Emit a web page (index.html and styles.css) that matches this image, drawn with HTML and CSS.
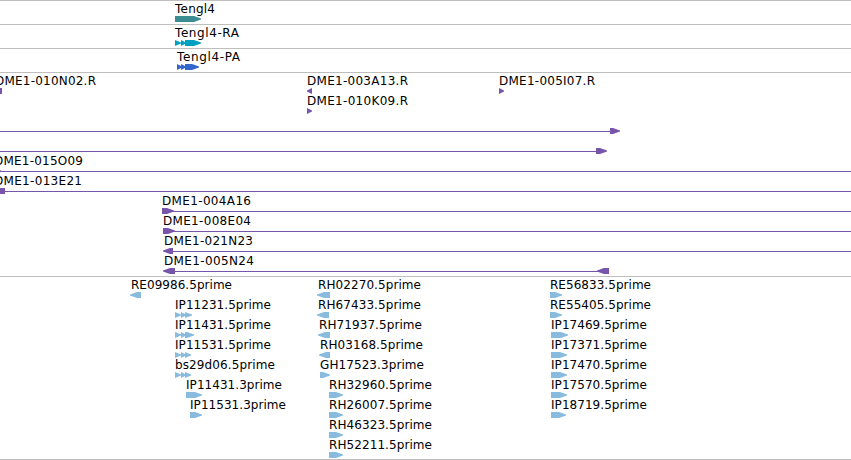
FILE: index.html
```
<!DOCTYPE html>
<html>
<head>
<meta charset="utf-8">
<title>Genome Browser</title>
<link rel="stylesheet" href="styles.css">
</head>
<body>
<div id="tracks"></div>
<script src="tracks.js"></script>
</body>
</html>
```
FILE: styles.css
```
body { margin: 0; background: #fff; overflow: hidden; }
#tracks { display: flex; flex-direction: column; }
.track { box-sizing: border-box; border-top: 1px solid #bebebe; padding-bottom: 3px; }
.track:last-child { border-bottom: 1px solid #bebebe; padding-bottom: 2px; }
.row { display: block; width: 100%; height: 20px; overflow: visible; }
.label { font: 12px "DejaVu Sans", sans-serif; fill: #000; }
.gene { fill: #3c8c93; }
.transcript { fill: #00a0c0; }
.protein { fill: #3366cc; }
.bac { fill: #7755aa; }
.est { fill: #88bbdd; }
```
FILE: tracks.js
```
// row: list of features, feature: { t: label, x: label start, w: label width, s: segments, l: line }
// segment: [from, to, strand]
var tracks = [
  { type: "gene", rows: [[{ t: "Tengl4", x: 175, w: 40, s: [[175, 201, 1]] }]] },
  { type: "transcript", rows: [[{ t: "Tengl4-RA", x: 175, w: 64, s: [[175, 181, 1], [181, 186, 1], [185, 201, 1]] }]] },
  { type: "protein", rows: [[{ t: "Tengl4-PA", x: 177, w: 63, s: [[177, 182, 1], [181, 186, 1], [185, 199, 1]] }]] },
  { type: "bac", rows: [
    [{ t: "DME1-010N02.R", x: -5, w: 101, s: [[-8, 2, -1]] },
     { t: "DME1-003A13.R", x: 307, w: 101, s: [[307, 312, -1]] },
     { t: "DME1-005I07.R", x: 499, w: 96, s: [[499, 504, 1]] }],
    [{ t: "DME1-010K09.R", x: 307, w: 101, s: [[307, 312, 1]] }],
    [{ s: [[610, 620, 1]], l: [0, 610] }],
    [{ s: [[596, 607, 1]], l: [0, 596] }],
    [{ t: "DME1-015O09", x: -6, w: 89, s: [[-8, 1, 1]], l: [0, 851] }],
    [{ t: "DME1-013E21", x: -6, w: 88, s: [[-8, 5, -1]], l: [5, 851] }],
    [{ t: "DME1-004A16", x: 162, w: 89, s: [[162, 174, 1]], l: [170, 851] }],
    [{ t: "DME1-008E04", x: 163, w: 88, s: [[163, 175, 1]], l: [170, 851] }],
    [{ t: "DME1-021N23", x: 164, w: 89, s: [[163, 173, -1]], l: [173, 851] }],
    [{ t: "DME1-005N24", x: 164, w: 90, s: [[163, 175, -1], [597, 609, -1]], l: [175, 600] }]
  ] },
  { type: "est", rows: [
    [{ t: "RE09986.5prime", x: 131, w: 101, s: [[130, 141, -1]] },
     { t: "RH02270.5prime", x: 318, w: 103, s: [[317, 330, -1]] },
     { t: "RE56833.5prime", x: 550, w: 101, s: [[550, 562, 1]] }],
    [{ t: "IP11231.5prime", x: 175, w: 96, s: [[175, 181, 1], [181, 186, 1], [185, 192, 1]] },
     { t: "RH67433.5prime", x: 318, w: 103, s: [[317, 329, -1]] },
     { t: "RE55405.5prime", x: 550, w: 101, s: [[550, 562, 1]] }],
    [{ t: "IP11431.5prime", x: 175, w: 96, s: [[175, 181, 1], [181, 186, 1], [185, 194, 1]] },
     { t: "RH71937.5prime", x: 319, w: 103, s: [[318, 330, -1]] },
     { t: "IP17469.5prime", x: 551, w: 96, s: [[551, 568, 1]] }],
    [{ t: "IP11531.5prime", x: 175, w: 96, s: [[175, 181, 1], [181, 186, 1], [185, 191, 1]] },
     { t: "RH03168.5prime", x: 320, w: 103, s: [[319, 330, -1]] },
     { t: "IP17371.5prime", x: 551, w: 96, s: [[551, 567, 1]] }],
    [{ t: "bs29d06.5prime", x: 175, w: 100, s: [[175, 181, 1], [181, 186, 1], [185, 191, 1]] },
     { t: "GH17523.3prime", x: 320, w: 104, s: [[320, 330, 1]] },
     { t: "IP17470.5prime", x: 551, w: 96, s: [[551, 567, 1]] }],
    [{ t: "IP11431.3prime", x: 186, w: 96, s: [[186, 202, 1]] },
     { t: "RH32960.5prime", x: 329, w: 103, s: [[329, 343, 1]] },
     { t: "IP17570.5prime", x: 551, w: 96, s: [[551, 567, 1]] }],
    [{ t: "IP11531.3prime", x: 190, w: 96, s: [[190, 202, 1]] },
     { t: "RH26007.5prime", x: 329, w: 103, s: [[329, 343, 1]] },
     { t: "IP18719.5prime", x: 551, w: 96, s: [[551, 566, 1]] }],
    [{ t: "RH46323.5prime", x: 329, w: 103, s: [[329, 343, 1]] }],
    [{ t: "RH52211.5prime", x: 329, w: 103, s: [[329, 343, 1]] }]
  ] }
];

function arrow(from, to, strand) {
  var head = to - from <= 6 ? to - from : 7;
  var tip = strand > 0 ? to : from;
  var tail = strand > 0 ? from : to;
  var neck = tip - strand * head;
  return '<polygon points="' + tail + ',15 ' + neck + ',15 ' + tip + ',17.5 ' + tip + ',18.5 ' + neck + ',21 ' + tail + ',21"/>';
}

function feature(f) {
  var out = "";
  if (f.l) out += '<rect x="' + f.l[0] + '" y="18" width="' + (f.l[1] - f.l[0]) + '" height="1"/>';
  f.s.forEach(function (s) { out += arrow(s[0], s[1], s[2]); });
  if (f.t) out += '<text class="label" x="' + f.x + '" y="12" textLength="' + f.w + '">' + f.t + '</text>';
  return out;
}

document.getElementById("tracks").innerHTML = tracks.map(function (t) {
  return '<div class="track">' + t.rows.map(function (r) {
    return '<svg class="row ' + t.type + '">' + r.map(feature).join("") + '</svg>';
  }).join("") + '</div>';
}).join("");
```
